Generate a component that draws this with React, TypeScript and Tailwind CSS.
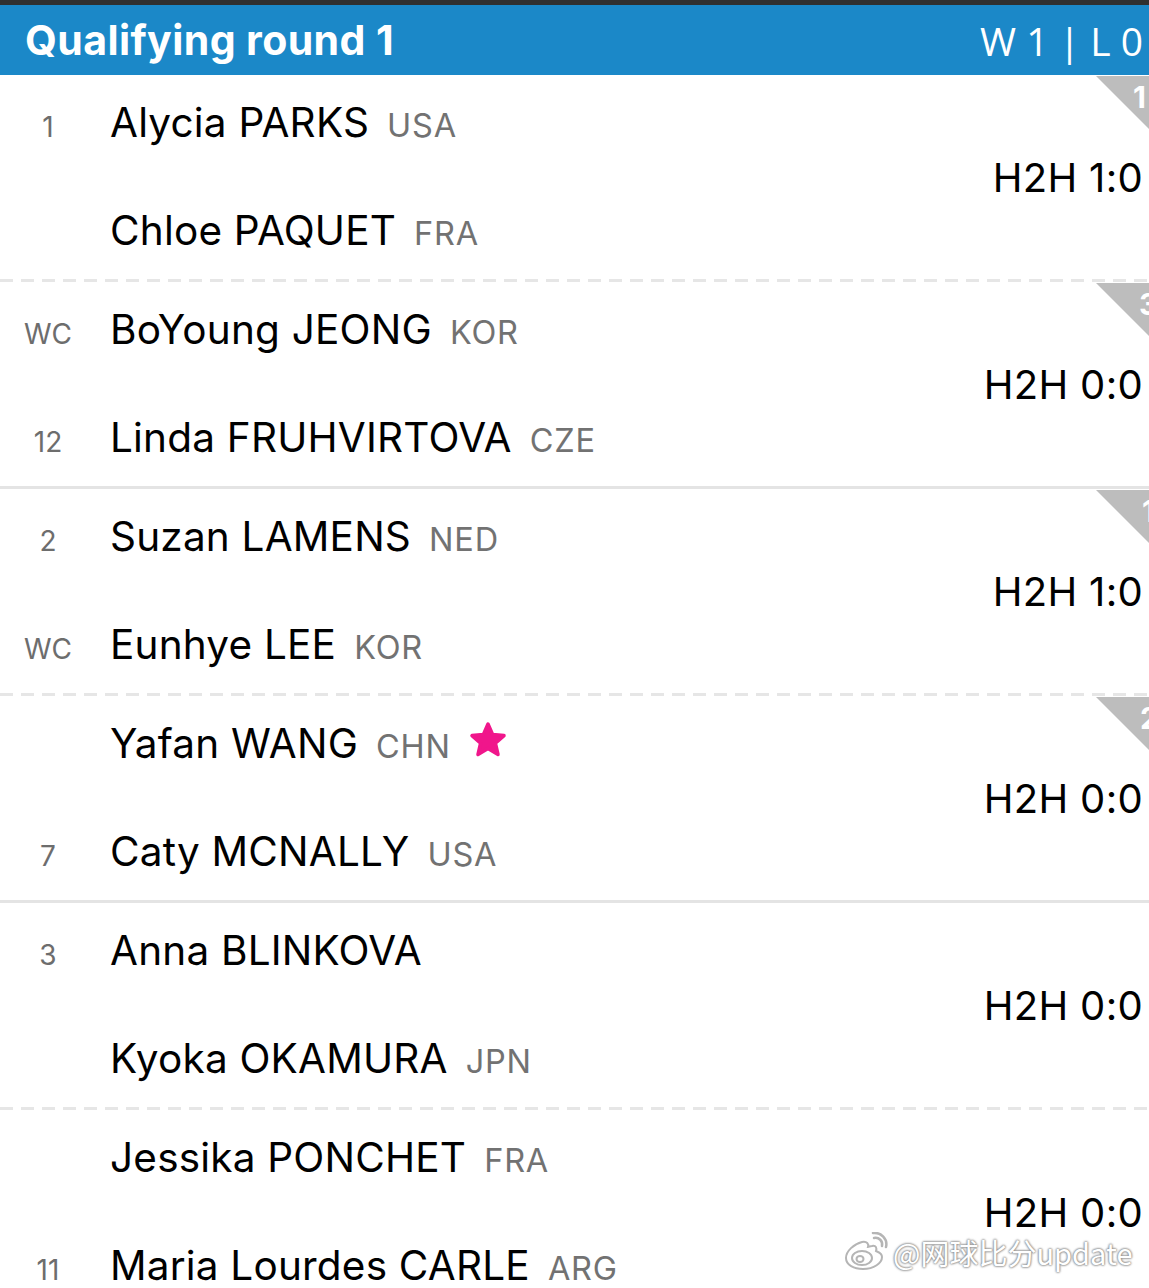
import React from "react";

type Player = { seed?: string; name: string; country?: string; star?: boolean };
type Match = { p1: Player; p2: Player; h2h: string; sep: "dashed" | "solid"; corner?: { n: string; x: number } };

const matches: Match[] = [
  { p1: { seed: "1", name: "Alycia PARKS", country: "USA" }, p2: { name: "Chloe PAQUET", country: "FRA" }, h2h: "H2H 1:0", sep: "dashed", corner: { n: "1", x: 37 } },
  { p1: { seed: "WC", name: "BoYoung JEONG", country: "KOR" }, p2: { seed: "12", name: "Linda FRUHVIRTOVA", country: "CZE" }, h2h: "H2H 0:0", sep: "solid", corner: { n: "3", x: 43 } },
  { p1: { seed: "2", name: "Suzan LAMENS", country: "NED" }, p2: { seed: "WC", name: "Eunhye LEE", country: "KOR" }, h2h: "H2H 1:0", sep: "dashed", corner: { n: "1", x: 46 } },
  { p1: { name: "Yafan WANG", country: "CHN", star: true }, p2: { seed: "7", name: "Caty MCNALLY", country: "USA" }, h2h: "H2H 0:0", sep: "solid", corner: { n: "2", x: 44 } },
  { p1: { seed: "3", name: "Anna BLINKOVA" }, p2: { name: "Kyoka OKAMURA", country: "JPN" }, h2h: "H2H 0:0", sep: "dashed" },
  { p1: { name: "Jessika PONCHET", country: "FRA" }, p2: { seed: "11", name: "Maria Lourdes CARLE", country: "ARG" }, h2h: "H2H 0:0", sep: "dashed" },
];

function Star() {
  return (
    <svg width="40" height="38" viewBox="0 0 40 38" className="ml-[17px] self-center -translate-y-[4px]">
      <polygon
        points="20,3 24.7,13.6 36,14.6 27.4,22.2 30,33.5 20,27.5 10,33.5 12.6,22.2 4,14.6 15.3,13.6"
        fill="#f0168b"
        stroke="#f0168b"
        strokeWidth="3.5"
        strokeLinejoin="round"
      />
    </svg>
  );
}

function PlayerRow({ p }: { p: Player }) {
  return (
    <div className="flex h-[50px] items-baseline">
      <span className="w-[96px] text-center text-[28px] leading-[50px] text-[#6d6d6d]">{p.seed ?? ""}</span>
      <span className="ml-[14px] text-[40.5px] leading-[50px] tracking-[0.2px] text-black">{p.name}</span>
      {p.country && <span className="ml-[18px] text-[32.5px] leading-[50px] tracking-[0.8px] text-[#727272]">{p.country}</span>}
      {p.star && <Star />}
    </div>
  );
}

function Separator({ kind }: { kind: "dashed" | "solid" }) {
  if (kind === "solid") return <div className="h-[3px] bg-[#e4e4e4]" />;
  return (
    <div className="h-[3px] bg-[repeating-linear-gradient(90deg,#e6e6e6_0px,#e6e6e6_13px,transparent_13px,transparent_21px)]" />
  );
}

function MatchBlock({ m }: { m: Match }) {
  return (
    <div>
      <div className="relative flex h-[204px]">
        <div className="flex flex-1 flex-col gap-[58px] pt-[23px]">
          <PlayerRow p={m.p1} />
          <PlayerRow p={m.p2} />
        </div>
        <div className="flex items-center pr-[6px] pt-[2px]">
          <span className="text-[40px] leading-none tracking-[0.3px] text-black">{m.h2h}</span>
        </div>
        {m.corner && (
          <div className="absolute right-[-31px] top-[1px] h-[84px] w-[84px]">
            <div className="absolute inset-0 bg-[#bdbdbd] [clip-path:polygon(0_0,100%_0,100%_100%)]" />
            <span
              className="absolute top-[6px] text-[30px] font-bold leading-none text-white"
              style={{ left: m.corner.x }}
            >
              {m.corner.n}
            </span>
          </div>
        )}
      </div>
      <Separator kind={m.sep} />
    </div>
  );
}

function Weibo() {
  return (
    <svg width="46" height="40" viewBox="0 0 46 40" className="mr-[4px]">
      <g fill="#ffffff" stroke="#b5b5b5" strokeWidth="2">
        <path d="M19 10c-8 2-16 9-16 16 0 7 8 11 17 11 11 0 19-6 19-12 0-4-4-5-6-6 1-3 0-6-4-5-2 0-3 1-4 1 1-3-1-6-6-5z" />
        <ellipse cx="19" cy="26" rx="10" ry="7" />
        <ellipse cx="17" cy="27" rx="3.5" ry="3" />
      </g>
      <g fill="none" stroke="#b5b5b5" strokeWidth="2.5" strokeLinecap="round">
        <path d="M31 6c5-1 9 3 8 8" />
        <path d="M30 1c8-1 15 6 13 14" />
      </g>
    </svg>
  );
}

export default function App() {
  return (
    <div className="relative h-[1288px] w-[1149px] overflow-hidden bg-white font-['Inter',sans-serif]">
      <div className="h-[5px] bg-[#303030]" />
      <div className="flex h-[70px] items-center justify-between bg-[#1b88c8] pl-[25px] pr-[6px]">
        <span className="text-[41px] font-bold leading-none tracking-[0.4px] text-white">Qualifying round 1</span>
        <span className="font-['Open_Sans',sans-serif] text-[39px] font-normal leading-none text-white">W 1 | L 0</span>
      </div>
      {matches.map((m, i) => (
        <MatchBlock key={i} m={m} />
      ))}
      <div className="absolute left-[843px] top-[1232px] flex items-center">
        <Weibo />
        <span className="font-['Noto_Sans_CJK_SC',sans-serif] text-[29px] leading-none text-white [text-shadow:0_0_2px_#8a8a8a,0_0_2px_#8a8a8a,0_0_3px_#9a9a9a]">
          @网球比分update
        </span>
      </div>
    </div>
  );
}
